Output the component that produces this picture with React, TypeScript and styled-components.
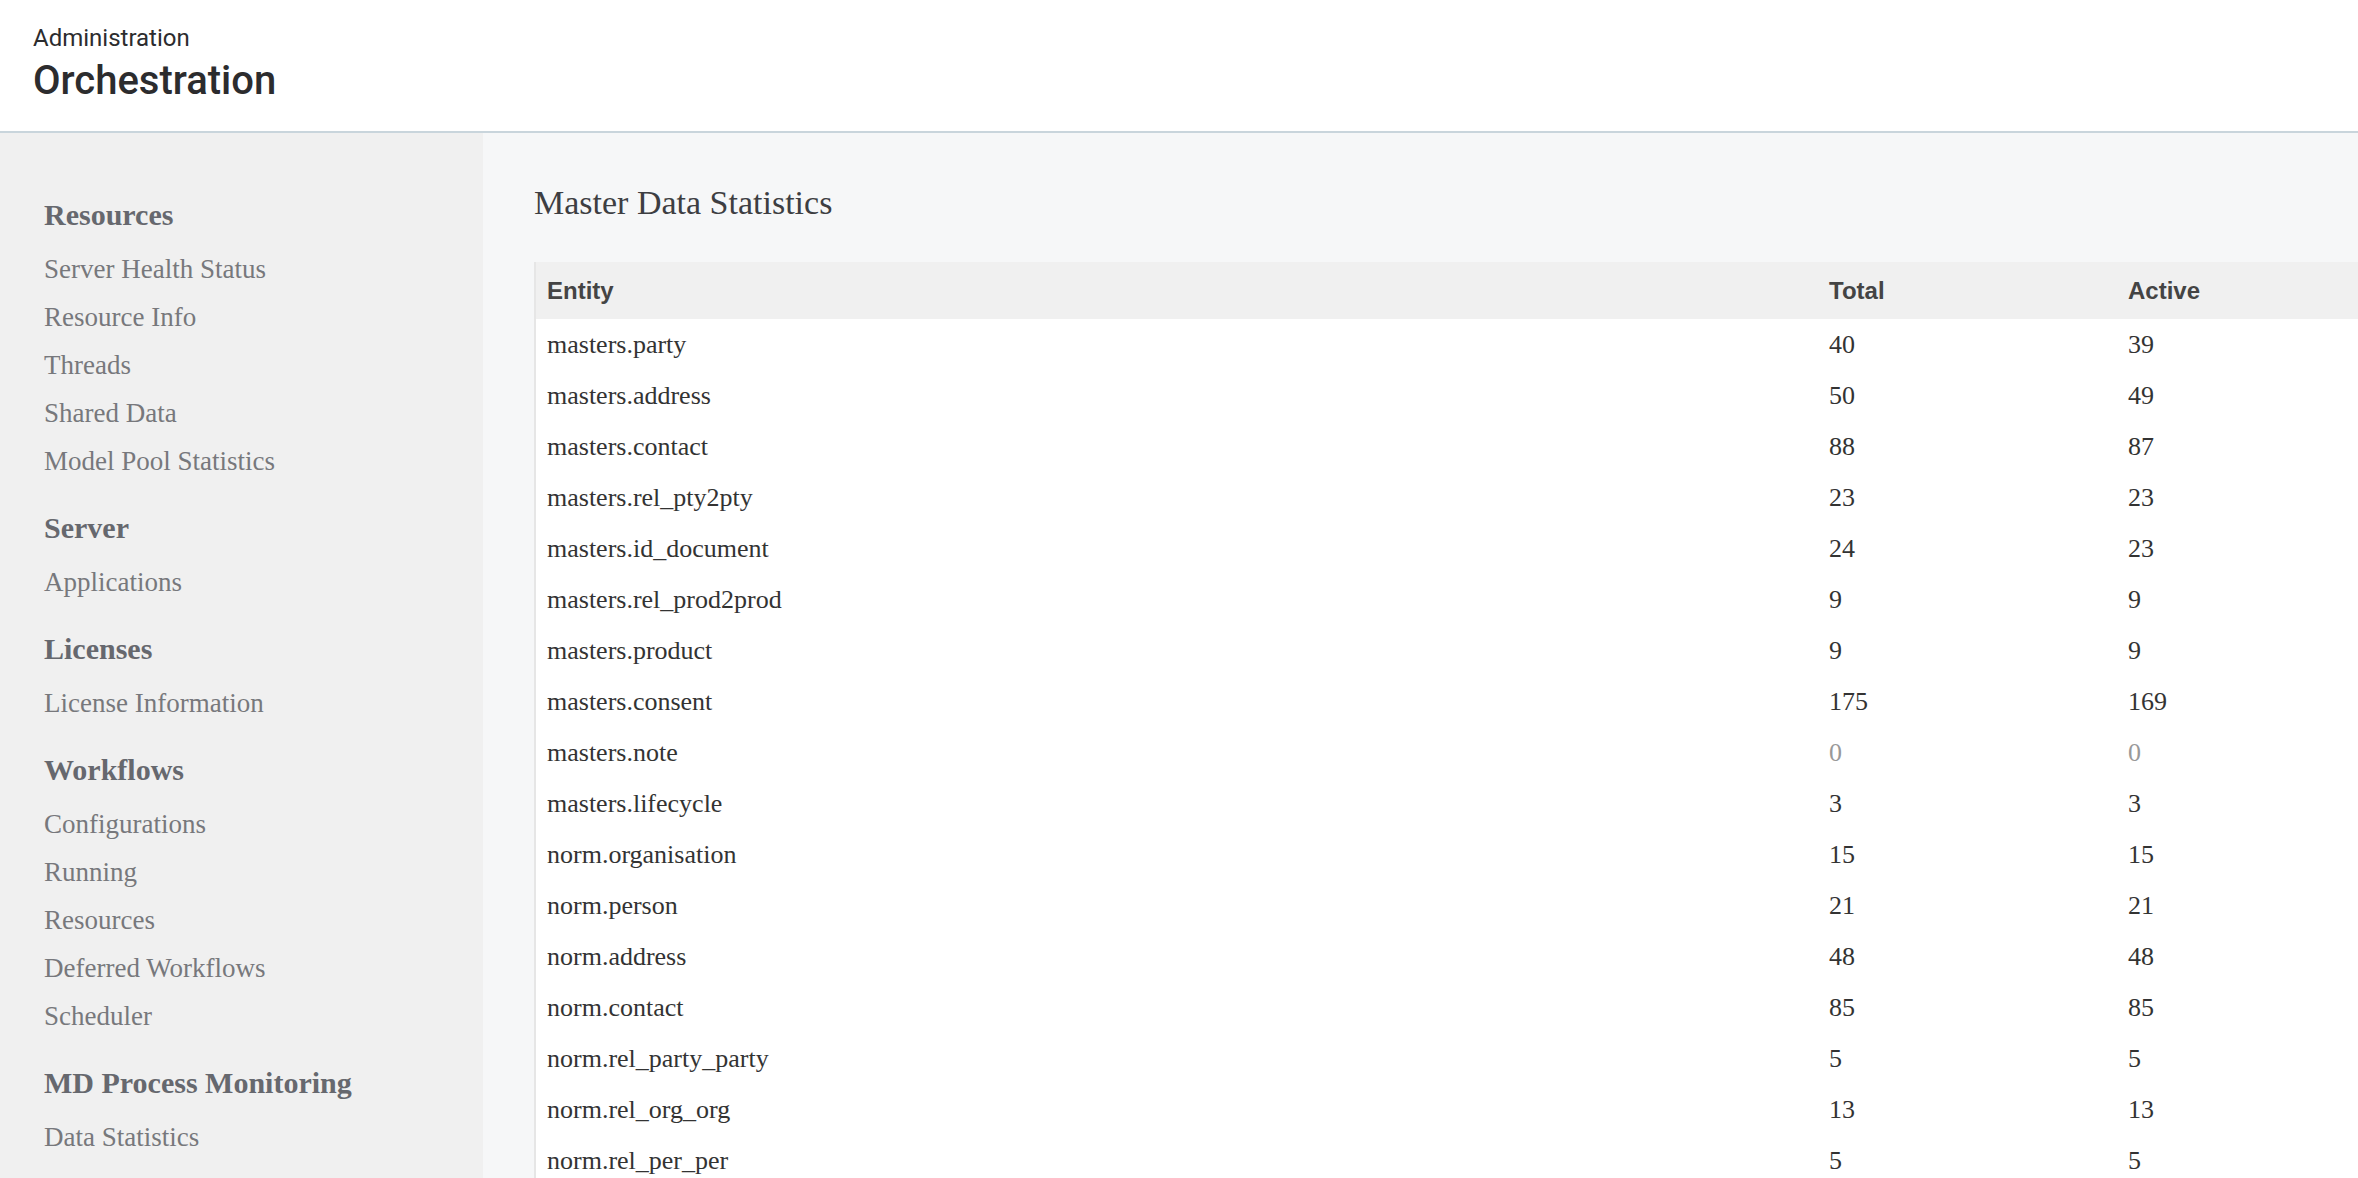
import styled, { createGlobalStyle } from "styled-components";

const GlobalStyle = createGlobalStyle`
  html, body {
    margin: 0;
    padding: 0;
    overflow: hidden;
    background: #f6f7f8;
  }
`;

const Page = styled.div`
  width: 2358px;
  height: 1178px;
  display: flex;
  flex-direction: column;
  overflow: hidden;
`;

const Header = styled.header`
  height: 133px;
  flex-shrink: 0;
  background: #fff;
  border-bottom: 2px solid #c9d5dc;
  padding: 23px 33px 0;
  box-sizing: border-box;
  font-family: Roboto, "Liberation Sans", sans-serif;
`;

const Crumb = styled.div`
  font-size: 24px;
  color: #2c2c2e;
  line-height: 30px;
`;

const PageTitle = styled.h1`
  margin: 4px 0 0;
  font-size: 40px;
  font-weight: 500;
  color: #2c2c2e;
  line-height: 48px;
`;

const Body = styled.div`
  flex: 1;
  display: flex;
  min-height: 0;
`;

const Sidebar = styled.nav`
  width: 483px;
  flex-shrink: 0;
  background: #f0f0f0;
  padding: 58px 0 0 44px;
  box-sizing: border-box;
  font-family: "Liberation Serif", serif;
`;

const Group = styled.div`
  margin-bottom: 19px;
`;

const GroupTitle = styled.div`
  font-size: 30px;
  font-weight: 700;
  color: #66686e;
  line-height: 48px;
  margin-bottom: 6px;
`;

const NavItem = styled.div`
  font-size: 27px;
  color: #77787c;
  line-height: 48px;
`;

const Main = styled.main`
  flex: 1;
  padding: 50px 0 0 51px;
  overflow: hidden;
`;

const SectionTitle = styled.h2`
  margin: 0 0 39px;
  font-family: "Liberation Serif", serif;
  font-weight: 400;
  font-size: 34px;
  color: #3d3e42;
  line-height: 40px;
`;

const Table = styled.table`
  width: 1900px;
  border-collapse: collapse;
  table-layout: fixed;
  border-left: 2px solid #e6e6e6;
`;

const HeadCell = styled.th<{ $w?: number }>`
  width: ${({ $w }) => ($w ? `${$w}px` : "auto")};
  height: 57px;
  background: #f0f0f0;
  text-align: left;
  padding: 0 11px;
  font-family: "Liberation Sans", Arial, sans-serif;
  font-size: 24px;
  font-weight: 700;
  color: #444;
`;

const Row = styled.tr`
  background: #fff;
`;

const Cell = styled.td<{ $muted?: boolean }>`
  height: 51px;
  padding: 0 11px;
  font-family: "Liberation Serif", serif;
  font-size: 26px;
  color: ${({ $muted }) => ($muted ? "#999" : "#333")};
`;

const nav = [
  { title: "Resources", items: ["Server Health Status", "Resource Info", "Threads", "Shared Data", "Model Pool Statistics"] },
  { title: "Server", items: ["Applications"] },
  { title: "Licenses", items: ["License Information"] },
  { title: "Workflows", items: ["Configurations", "Running", "Resources", "Deferred Workflows", "Scheduler"] },
  { title: "MD Process Monitoring", items: ["Data Statistics"] },
];

const rows: [string, number, number][] = [
  ["masters.party", 40, 39],
  ["masters.address", 50, 49],
  ["masters.contact", 88, 87],
  ["masters.rel_pty2pty", 23, 23],
  ["masters.id_document", 24, 23],
  ["masters.rel_prod2prod", 9, 9],
  ["masters.product", 9, 9],
  ["masters.consent", 175, 169],
  ["masters.note", 0, 0],
  ["masters.lifecycle", 3, 3],
  ["norm.organisation", 15, 15],
  ["norm.person", 21, 21],
  ["norm.address", 48, 48],
  ["norm.contact", 85, 85],
  ["norm.rel_party_party", 5, 5],
  ["norm.rel_org_org", 13, 13],
  ["norm.rel_per_per", 5, 5],
];

export default function App() {
  return (
    <Page>
      <GlobalStyle />
      <Header>
        <Crumb>Administration</Crumb>
        <PageTitle>Orchestration</PageTitle>
      </Header>
      <Body>
        <Sidebar>
          {nav.map((g) => (
            <Group key={g.title}>
              <GroupTitle>{g.title}</GroupTitle>
              {g.items.map((i) => (
                <NavItem key={i}>{i}</NavItem>
              ))}
            </Group>
          ))}
        </Sidebar>
        <Main>
          <SectionTitle>Master Data Statistics</SectionTitle>
          <Table>
            <thead>
              <tr>
                <HeadCell $w={1260}>Entity</HeadCell>
                <HeadCell $w={276}>Total</HeadCell>
                <HeadCell>Active</HeadCell>
              </tr>
            </thead>
            <tbody>
              {rows.map(([name, total, active]) => (
                <Row key={name}>
                  <Cell>{name}</Cell>
                  <Cell $muted={total === 0}>{total}</Cell>
                  <Cell $muted={active === 0}>{active}</Cell>
                </Row>
              ))}
            </tbody>
          </Table>
        </Main>
      </Body>
    </Page>
  );
}
